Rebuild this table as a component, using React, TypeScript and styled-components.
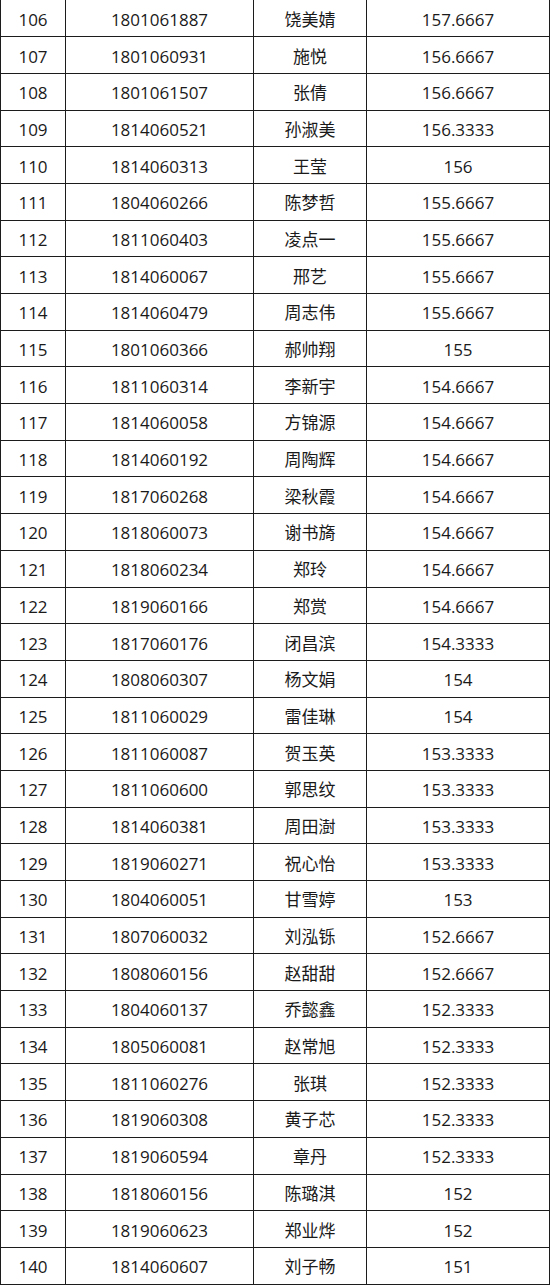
import React from 'react'
import styled, { createGlobalStyle } from 'styled-components'

const GlobalStyle = createGlobalStyle`
  html, body {
    margin: 0;
    padding: 0;
    background: #ffffff;
  }
`

const rows: [number, string, string, string][] = [
  [106, '1801061887', '饶美婧', '157.6667'],
  [107, '1801060931', '施悦', '156.6667'],
  [108, '1801061507', '张倩', '156.6667'],
  [109, '1814060521', '孙淑美', '156.3333'],
  [110, '1814060313', '王莹', '156'],
  [111, '1804060266', '陈梦哲', '155.6667'],
  [112, '1811060403', '凌点一', '155.6667'],
  [113, '1814060067', '邢艺', '155.6667'],
  [114, '1814060479', '周志伟', '155.6667'],
  [115, '1801060366', '郝帅翔', '155'],
  [116, '1811060314', '李新宇', '154.6667'],
  [117, '1814060058', '方锦源', '154.6667'],
  [118, '1814060192', '周陶辉', '154.6667'],
  [119, '1817060268', '梁秋霞', '154.6667'],
  [120, '1818060073', '谢书旖', '154.6667'],
  [121, '1818060234', '郑玲', '154.6667'],
  [122, '1819060166', '郑赏', '154.6667'],
  [123, '1817060176', '闭昌滨', '154.3333'],
  [124, '1808060307', '杨文娟', '154'],
  [125, '1811060029', '雷佳琳', '154'],
  [126, '1811060087', '贺玉英', '153.3333'],
  [127, '1811060600', '郭思纹', '153.3333'],
  [128, '1814060381', '周田澍', '153.3333'],
  [129, '1819060271', '祝心怡', '153.3333'],
  [130, '1804060051', '甘雪婷', '153'],
  [131, '1807060032', '刘泓铄', '152.6667'],
  [132, '1808060156', '赵甜甜', '152.6667'],
  [133, '1804060137', '乔懿鑫', '152.3333'],
  [134, '1805060081', '赵常旭', '152.3333'],
  [135, '1811060276', '张琪', '152.3333'],
  [136, '1819060308', '黄子芯', '152.3333'],
  [137, '1819060594', '章丹', '152.3333'],
  [138, '1818060156', '陈璐淇', '152'],
  [139, '1819060623', '郑业烨', '152'],
  [140, '1814060607', '刘子畅', '151'],
]

const Table = styled.table`
  width: 549px;
  table-layout: fixed;
  border-collapse: collapse;
  font-family: 'Open Sans', 'Noto Sans CJK SC', sans-serif;
  font-size: 17px;
  color: #1a1a1a;
`

const Row = styled.tr`
  height: 36.7px;

  &:first-child td {
    border-top: none;
  }
`

const Cell = styled.td`
  border: 1px solid #1c1c1c;
  padding: 0;
  padding-top: 2px;
  text-align: center;
  vertical-align: middle;
  line-height: 1;
  white-space: nowrap;
`

const widths = [65, 188, 113, 183]

const App = () => (
  <>
    <GlobalStyle />
    <Table>
      <colgroup>
        {widths.map((w) => (
          <col key={w} style={{ width: w }} />
        ))}
      </colgroup>
      <tbody>
        {rows.map(([no, id, name, score]) => (
          <Row key={no}>
            <Cell>{no}</Cell>
            <Cell>{id}</Cell>
            <Cell>{name}</Cell>
            <Cell>{score}</Cell>
          </Row>
        ))}
      </tbody>
    </Table>
  </>
)

export default App
